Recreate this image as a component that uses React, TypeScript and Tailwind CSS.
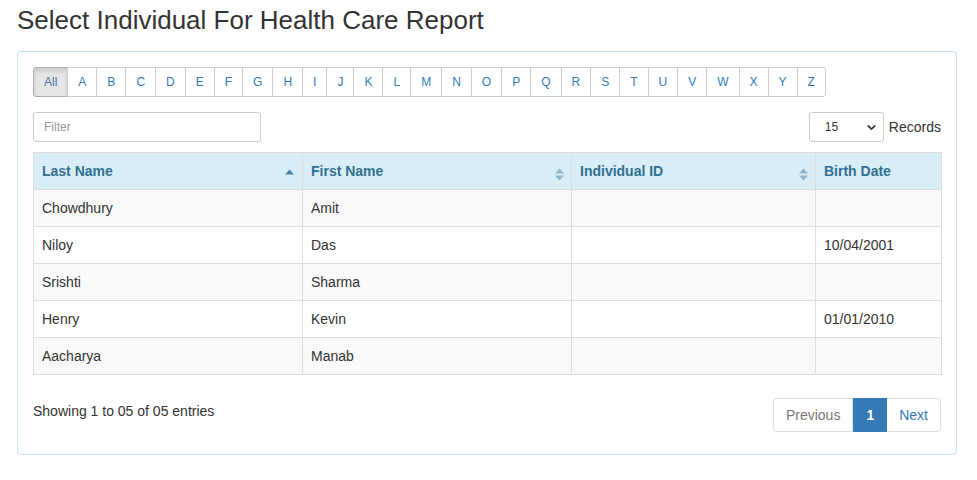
import { ChevronDown } from "lucide-react";

const letters = "ABCDEFGHIJKLMNOPQRSTUVWXYZ".split("");

const rows = [
  { last: "Chowdhury", first: "Amit", id: "", birth: "" },
  { last: "Niloy", first: "Das", id: "", birth: "10/04/2001" },
  { last: "Srishti", first: "Sharma", id: "", birth: "" },
  { last: "Henry", first: "Kevin", id: "", birth: "01/01/2010" },
  { last: "Aacharya", first: "Manab", id: "", birth: "" },
];

function SortAsc() {
  return (
    <svg width="9" height="6" viewBox="0 0 9 6" className="shrink-0 mt-[1px]">
      <path d="M0 5.5 L4.5 0.5 L9 5.5 Z" fill="#4f84a6" />
    </svg>
  );
}

function SortBoth() {
  return (
    <svg width="9" height="13" viewBox="0 0 9 13" className="shrink-0 mt-[7px]">
      <path d="M0 5.5 L4.5 0.5 L9 5.5 Z" fill="#93b5ca" />
      <path d="M0 7.5 L4.5 12.5 L9 7.5 Z" fill="#93b5ca" />
    </svg>
  );
}

export default function App() {
  return (
    <div className="w-[977px] h-[480px] bg-white text-[#333] font-['Liberation_Sans',Arial,sans-serif]">
      <h1 className="pl-[17px] pt-[5px] text-[26px] leading-[30px] text-[#333]">
        Select Individual For Health Care Report
      </h1>

      <div className="ml-[17px] mt-[16px] w-[940px] h-[404px] border border-[#bce8f1] rounded-[4px] p-[15px]">
        {/* alphabet filter */}
        <div className="flex">
          <button className="h-[30px] px-[10px] text-[12px] text-[#4a72a0] bg-[#e6e6e6] border border-[#adadad] rounded-l-[3px] shadow-[inset_0_3px_5px_rgba(0,0,0,0.125)]">
            All
          </button>
          {letters.map((l, i) => (
            <button
              key={l}
              className={`h-[30px] -ml-px px-[10px] text-[12px] text-[#337ab7] bg-white border border-[#ccc] ${
                i === letters.length - 1 ? "rounded-r-[3px]" : ""
              }`}
            >
              {l}
            </button>
          ))}
        </div>

        {/* filter + records */}
        <div className="flex items-center justify-between mt-[15px]">
          <input
            placeholder="Filter"
            className="w-[228px] h-[30px] px-[10px] text-[12px] border border-[#ccc] rounded-[3px] placeholder:text-[#999] outline-none"
          />
          <div className="flex items-center">
            <div className="w-[75px] h-[30px] flex items-center justify-between pl-[15px] pr-[5px] border border-[#ccc] rounded-[3px] text-[12px] text-[#333]">
              <span>15</span>
              <ChevronDown size={13} strokeWidth={3} className="text-[#333]" />
            </div>
            <span className="ml-[5px] text-[14px]">Records</span>
          </div>
        </div>

        {/* table */}
        <table className="mt-[10px] w-[908px] table-fixed border-collapse text-[14px]">
          <colgroup>
            <col className="w-[269px]" />
            <col className="w-[269px]" />
            <col className="w-[244px]" />
            <col className="w-[126px]" />
          </colgroup>
          <thead>
            <tr className="bg-[#d9edf7] text-[#31708f]">
              <th className="h-[37px] border border-[#ddd] pl-[8px] pr-[8px] text-left font-bold">
                <div className="flex items-center justify-between">
                  <span>Last Name</span>
                  <SortAsc />
                </div>
              </th>
              <th className="h-[37px] border border-[#ddd] pl-[8px] pr-[7px] text-left font-bold">
                <div className="flex items-center justify-between">
                  <span>First Name</span>
                  <SortBoth />
                </div>
              </th>
              <th className="h-[37px] border border-[#ddd] pl-[8px] pr-[7px] text-left font-bold">
                <div className="flex items-center justify-between">
                  <span>Individual ID</span>
                  <SortBoth />
                </div>
              </th>
              <th className="h-[37px] border border-[#ddd] px-[8px] text-left font-bold">
                Birth Date
              </th>
            </tr>
          </thead>
          <tbody>
            {rows.map((r, i) => (
              <tr key={r.last} className={i % 2 === 0 ? "bg-[#f9f9f9]" : "bg-white"}>
                <td className="h-[37px] border border-[#ddd] px-[8px]">{r.last}</td>
                <td className="h-[37px] border border-[#ddd] px-[8px]">{r.first}</td>
                <td className="h-[37px] border border-[#ddd] px-[8px]">{r.id}</td>
                <td className="h-[37px] border border-[#ddd] px-[8px]">{r.birth}</td>
              </tr>
            ))}
          </tbody>
        </table>

        {/* footer */}
        <div className="flex items-start justify-between mt-[23px]">
          <div className="mt-[3px] text-[14px]">Showing 1 to 05 of 05 entries</div>
          <div className="flex h-[34px] text-[14px]">
            <span className="flex items-center px-[12px] border border-[#ddd] rounded-l-[4px] text-[#777]">
              Previous
            </span>
            <span className="flex items-center px-[12px] bg-[#337ab7] border border-[#337ab7] text-white font-bold">
              1
            </span>
            <span className="flex items-center px-[12px] border border-[#ddd] border-l-0 rounded-r-[4px] text-[#337ab7]">
              Next
            </span>
          </div>
        </div>
      </div>
    </div>
  );
}
